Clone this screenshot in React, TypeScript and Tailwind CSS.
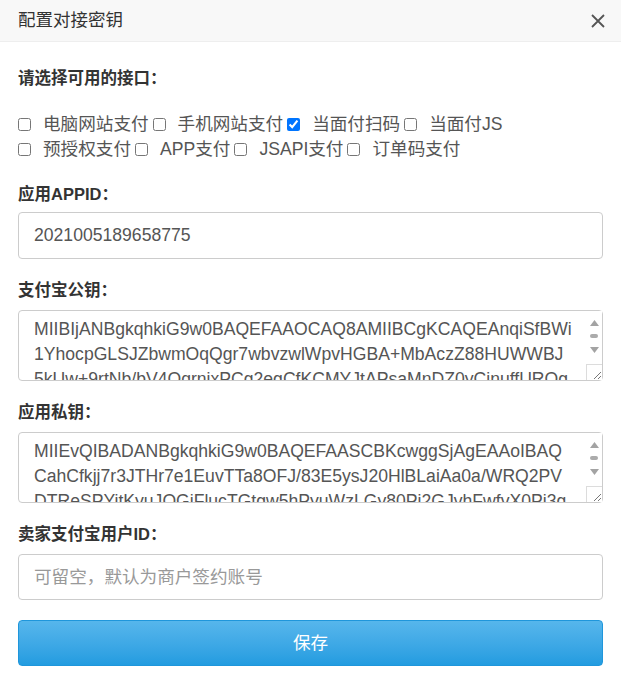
import React from "react";

const pubKey =
  "MIIBIjANBgkqhkiG9w0BAQEFAAOCAQ8AMIIBCgKCAQEAnqiSfBWi1YhocpGLSJZbwmOqQgr7wbvzwlWpvHGBA+MbAczZ88HUWWBJ5kUw+9rtNb/bV4OqrnixPCg2egCfKCMYJtAPsaMnDZ0yCinuffURQgTk3vL8mYqPzR2sWc1dHfE7oXbGtN6aK9pJiLuV4yBQcS0eMhOw5rFxDn3lZgIkAyTvUbCjPsW8qHe2NmRfXo1d7KtLaQIDAQAB";

const priKey =
  "MIIEvQIBADANBgkqhkiG9w0BAQEFAASCBKcwggSjAgEAAoIBAQCahCfkjj7r3JTHr7e1EuvTTa8OFJ/83E5ysJ20HlBLaiAa0a/WRQ2PVDTReSPYitKyuJQGjFlucTGtgw5hPyuWzLGy80Pi2GJvhFwfvX0Pi3gTx4kR9mNcW2sLpEoYdQ7bZuA1nVfH5tMiGrKe8jO6wS3xPqDlCzUy0aHbN4vIo";

const apis = [
  { label: "电脑网站支付", checked: false },
  { label: "手机网站支付", checked: false },
  { label: "当面付扫码", checked: true },
  { label: "当面付JS", checked: false },
  { label: "预授权支付", checked: false },
  { label: "APP支付", checked: false },
  { label: "JSAPI支付", checked: false },
  { label: "订单码支付", checked: false },
];

const font = "font-['Liberation_Sans','Noto_Sans_CJK_SC',sans-serif]";

function Label({ children }: { children: React.ReactNode }) {
  return (
    <div className="mt-[21px] mb-[10px] h-[20px] leading-[20px] text-[16.5px] font-bold text-[#333]">
      {children}
    </div>
  );
}

// fake classic scrollbar + resize corner, drawn over the textarea's right edge
function ScrollBar() {
  return (
    <div className="absolute right-[1px] top-[1px] bottom-[1px] w-[16px] bg-white flex flex-col items-center">
      <svg width="9" height="6" viewBox="0 0 9 6" className="mt-[9px]">
        <path d="M4.5 0 L9 6 L0 6 Z" fill="#a3a3a3" />
      </svg>
      <div className="mt-[8px] w-[8px] h-[4px] rounded-full bg-[#ababab]" />
      <svg width="9" height="6" viewBox="0 0 9 6" className="mt-[9px]">
        <path d="M0 0 L9 0 L4.5 6 Z" fill="#a3a3a3" />
      </svg>
      <div className="mt-auto w-[16px] h-[16px] border-t border-l border-[#dcdcdc] flex items-end justify-end">
        <svg width="10" height="10" viewBox="0 0 10 10">
          <path d="M9 2 L2 9 M9 6 L6 9" stroke="#777" strokeWidth="1" />
        </svg>
      </div>
    </div>
  );
}

function KeyBox({ value }: { value: string }) {
  return (
    <div className="relative">
      <textarea
        defaultValue={value}
        className="block w-full h-[71px] pl-[15px] pr-[30px] pt-[6px] pb-[6px] leading-[25px] border border-[#ccc] rounded-[4px] text-[17.6px] text-[#555] outline-none overflow-hidden resize-none"
      />
      <ScrollBar />
    </div>
  );
}

export default function App() {
  return (
    <div className={`w-[621px] h-[689px] bg-white overflow-hidden ${font}`}>
      {/* header */}
      <div className="h-[42px] bg-[#f8f8f8] border-b border-[#eeeeee] flex items-center justify-between pl-[18px] pr-[16px]">
        <span className="text-[17.5px] text-[#333]">配置对接密钥</span>
        <svg width="14" height="14" viewBox="0 0 14 14" className="text-[#555]">
          <path d="M1 1 L13 13 M13 1 L1 13" stroke="currentColor" strokeWidth="1.8" />
        </svg>
      </div>

      <div className="px-[18px]">
        <div className="mt-[26px] h-[20px] leading-[20px] text-[16.5px] font-bold text-[#333]">
          请选择可用的接口：
        </div>

        <div className="mt-[24px] flex flex-wrap gap-x-[4px] text-[17.6px] text-[#555] leading-[25px]">
          {apis.map((a) => (
            <label key={a.label} className="flex items-center gap-[12px]">
              <input
                type="checkbox"
                defaultChecked={a.checked}
                className="w-[13px] h-[13px] m-0"
              />
              <span>{a.label}</span>
            </label>
          ))}
        </div>

        <div className="mt-[22px] mb-[8px] h-[20px] leading-[20px] text-[16.5px] font-bold text-[#333]">
          应用APPID：
        </div>
        <input
          defaultValue="2021005189658775"
          className="block w-full h-[47px] px-[15px] border border-[#ccc] rounded-[4px] text-[17.6px] text-[#555] outline-none"
        />

        <Label>支付宝公钥：</Label>
        <KeyBox value={pubKey} />

        <Label>应用私钥：</Label>
        <KeyBox value={priKey} />

        <Label>卖家支付宝用户ID：</Label>
        <input
          placeholder="可留空，默认为商户签约账号"
          className="block w-full h-[46px] px-[15px] border border-[#ccc] rounded-[4px] text-[17.6px] text-[#555] placeholder:text-[#999] outline-none"
        />

        <button className="mt-[20px] w-full h-[46px] rounded-[4px] border border-[#1f96db] bg-gradient-to-b from-[#56b6ec] to-[#229ce0] text-white text-[17.6px]">
          保存
        </button>
      </div>
    </div>
  );
}
